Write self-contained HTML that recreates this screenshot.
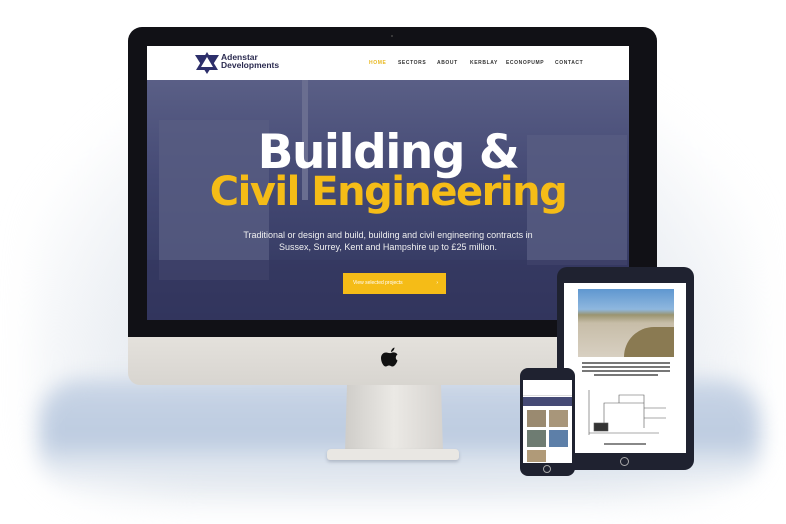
<!DOCTYPE html>
<html><head><meta charset="utf-8"><style>
*{margin:0;padding:0;box-sizing:border-box}
body{width:786px;height:524px;overflow:hidden;background:#fff;position:relative;font-family:"Liberation Sans",sans-serif}
.abs{position:absolute}
.glow{left:30px;top:60px;width:730px;height:440px;border-radius:80px;background:radial-gradient(ellipse at 50% 70%,#dfe5ee 0%,#e9edf2 50%,rgba(255,255,255,0) 80%);filter:blur(16px)}
.band{left:40px;top:380px;width:720px;height:110px;background:linear-gradient(180deg,#c9d5e6 0%,#bccbe0 55%,#dfe6ef 75%,rgba(255,255,255,0) 100%);filter:blur(10px);border-radius:40px}
.frame{left:128px;top:27px;width:529px;height:312px;background:#111116;border-radius:14px 14px 0 0}
.chin{left:128px;top:337px;width:529px;height:48px;background:linear-gradient(#e4e1dc,#d8d5d0);border-radius:0 0 12px 12px}
.screen{left:147px;top:46px;width:482px;height:274px;overflow:hidden;background:#3f4470}
.nav{left:0;top:0;width:482px;height:34px;background:#fff}
.hero{left:0;top:34px;width:482px;height:240px;background:linear-gradient(180deg,#5a5f86 0%,#454a75 40%,#3a3f68 70%,#2c3058 100%)}
.bld{background:#585c82;opacity:.8}
.nav span{position:absolute;top:14px;font-size:5px;font-weight:bold;letter-spacing:.6px;color:#333}
.h1{font-family:"DejaVu Sans",sans-serif;font-weight:bold;text-align:center;width:482px;left:0;letter-spacing:-1.5px}
.stand{left:345px;top:385px;width:98px;height:68px;background:linear-gradient(90deg,#cfcdc9,#ebe9e5 50%,#d6d3cf);clip-path:polygon(2% 0,98% 0,100% 100%,0 100%)}
.base{left:327px;top:449px;width:132px;height:11px;background:#e9e7e3;border-radius:4px 4px 3px 3px;box-shadow:0 2px 3px rgba(80,90,110,.3)}
.tab{left:557px;top:267px;width:137px;height:203px;background:#1f2230;border-radius:10px}
.tscr{left:564px;top:283px;width:122px;height:170px;background:#fff}
.ph{left:520px;top:368px;width:55px;height:108px;background:#1f2230;border-radius:8px}
.pscr{left:523px;top:380px;width:49px;height:83px;background:#fff}
.tl{background:#777;height:1.5px}
</style></head><body>
<div class="abs glow"></div>
<div class="abs band"></div>
<div class="abs frame"></div>
<div class="abs" style="left:391px;top:35px;width:2px;height:2px;background:#444;border-radius:50%"></div>
<div class="abs screen">
 <div class="abs hero">
  <div class="abs bld" style="left:12px;top:40px;width:110px;height:160px"></div>
  <div class="abs bld" style="left:380px;top:55px;width:100px;height:130px"></div>
  <div class="abs" style="left:155px;top:0;width:6px;height:120px;background:#6a6e90"></div>
  <div class="abs" style="left:0;top:180px;width:482px;height:60px;background:#343860;opacity:.7"></div>
 </div>
 <div class="abs nav">
  <svg class="abs" style="left:48px;top:6px" width="24" height="22" viewBox="0 0 24 22"><polygon points="0,3 24,3 12,22" fill="#2d2f6b"/><polygon points="12,0 23,18 1,18" fill="#2d2f6b"/><polygon points="12,5 18,15 6,15" fill="#fff"/></svg>
  <div class="abs" style="left:74px;top:7px;font-size:8.5px;line-height:8px;color:#2b2b50;font-weight:bold">Adenstar<br>Developments</div>
  <span style="left:222px;color:#e8b820">HOME</span><span style="left:251px">SECTORS</span><span style="left:290px">ABOUT</span><span style="left:323px">KERBLAY</span><span style="left:359px">ECONOPUMP</span><span style="left:408px">CONTACT</span>
 </div>
 <div class="abs h1" style="top:84px;font-size:47px;color:#fff;line-height:46px">Building &amp;</div>
 <div class="abs h1" style="top:125px;font-size:40px;color:#f5bc17;line-height:42px">Civil Engineering</div>
 <div class="abs" style="left:0;width:482px;top:183px;text-align:center;color:#f0f0f0;font-size:9px;line-height:12px">Traditional or design and build, building and civil engineering contracts in<br>Sussex, Surrey, Kent and Hampshire up to £25 million.</div>
 <div class="abs" style="left:196px;top:227px;width:103px;height:21px;background:#f5bc17;color:#fff;font-size:5px;line-height:21px;padding-left:10px">View selected projects <span style="float:right;margin-right:8px">›</span></div>
</div>
<div class="abs chin"></div>
<svg class="abs" style="left:381px;top:347px" width="20" height="24" viewBox="0 0 20 24"><path d="M10 6c2-1 5-1 6.5 1.5-2 1.3-2.5 4.5 0 6-1 3-3 6-5 6-1.5 0-2-1-3.5-1s-2 1-3.5 1C2.5 19.5 0 15 0 11s3-5.5 5-5.5c2 0 3 1 5 .5z M10 5c0-2 1.5-4 3.5-4.5 0 2-1.5 4-3.5 4.5z" fill="#111"/></svg>
<div class="abs stand"></div>
<div class="abs base"></div>
<div class="abs tab"></div>
<div class="abs tscr">
 <div class="abs" style="left:14px;top:6px;width:96px;height:68px;background:linear-gradient(180deg,#5f97d0 0%,#8fb7de 30%,#9a9470 38%,#c7bda8 50%,#d8d0c2 100%)"></div>
 <div class="abs" style="left:60px;top:44px;width:50px;height:30px;background:#8a7a52;border-radius:30px 0 0 0"></div>
 <div class="abs tl" style="left:18px;top:79px;width:88px"></div>
 <div class="abs tl" style="left:18px;top:83px;width:88px"></div>
 <div class="abs tl" style="left:18px;top:87px;width:88px"></div>
 <div class="abs tl" style="left:30px;top:91px;width:64px"></div>
 <svg class="abs" style="left:20px;top:105px" width="86" height="50" viewBox="0 0 86 50" fill="none" stroke="#555" stroke-width=".6"><path d="M5 2v45M5 45h70M20 40v-25h40v25M35 15v-8h25v8M60 20h22M60 30h22"/><rect x="10" y="35" width="14" height="8" fill="#333"/></svg>
 <div class="abs tl" style="left:40px;top:160px;width:42px;background:#888"></div>
</div>
<div class="abs" style="left:620px;top:457px;width:9px;height:9px;border:1px solid #aaa;border-radius:50%"></div>
<div class="abs ph"></div>
<div class="abs pscr">
 <div class="abs" style="left:0;top:6px;width:49px;height:10px;background:#fff;border-bottom:1px solid #ddd"></div>
 <div class="abs" style="left:0;top:17px;width:49px;height:9px;background:#454a75"></div>
 <div class="abs" style="left:4px;top:30px;width:19px;height:17px;background:#9a8a70"></div>
 <div class="abs" style="left:26px;top:30px;width:19px;height:17px;background:#a8967a"></div>
 <div class="abs" style="left:4px;top:50px;width:19px;height:17px;background:#6e7c72"></div>
 <div class="abs" style="left:26px;top:50px;width:19px;height:17px;background:#5d7fa8"></div>
 <div class="abs" style="left:4px;top:70px;width:19px;height:12px;background:#b09a78"></div>
</div>
<div class="abs" style="left:543px;top:465px;width:8px;height:8px;border:1px solid #aaa;border-radius:50%"></div>
</body></html>
